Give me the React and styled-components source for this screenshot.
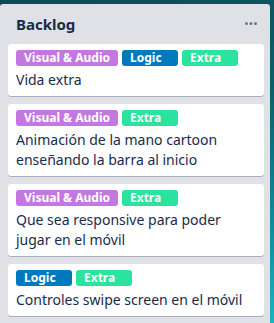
import styled, { createGlobalStyle } from 'styled-components';

const GlobalStyle = createGlobalStyle`
  html, body {
    margin: 0;
    padding: 0;
    overflow: hidden;
  }
  body {
    font-family: 'Noto Sans', 'Liberation Sans', sans-serif;
  }
`;

const LABEL_COLORS = {
  'Visual & Audio': '#c377e0',
  Logic: '#0079bf',
  Extra: '#29e39e',
};

const cards = [
  { labels: ['Visual & Audio', 'Logic', 'Extra'], title: 'Vida extra' },
  { labels: ['Visual & Audio', 'Extra'], title: 'Animación de la mano cartoon enseñando la barra al inicio' },
  { labels: ['Visual & Audio', 'Extra'], title: 'Que sea responsive para poder jugar en el móvil' },
  { labels: ['Logic', 'Extra'], title: 'Controles swipe screen en el móvil' },
];

const App = () => {
  return (
    <Board>
      <GlobalStyle />
      <List>
        <ListHeader>
          <h2>Backlog</h2>
          <MenuButton>
            <svg width='12' height='3' viewBox='0 0 12 3'>
              <circle cx='1.5' cy='1.5' r='1.5' fill='#6b778c' />
              <circle cx='6' cy='1.5' r='1.5' fill='#6b778c' />
              <circle cx='10.5' cy='1.5' r='1.5' fill='#6b778c' />
            </svg>
          </MenuButton>
        </ListHeader>
        {cards.map((card, idx) => (
          <Card key={idx}>
            <Labels>
              {card.labels.map(label => (
                <Label key={label} color={LABEL_COLORS[label]}>
                  {label}
                </Label>
              ))}
            </Labels>
            <CardTitle>{card.title}</CardTitle>
          </Card>
        ))}
      </List>
    </Board>
  );
};

const Board = styled.div`
  height: 323px;
  padding-top: 4px;
  box-sizing: border-box;
  background: linear-gradient(160deg, #0a4a55 0%, #0d5f6b 45%, #1390a0 80%, #19b3bf 100%);
  overflow: hidden;
`;

const List = styled.div`
  width: 270px;
  background: #dfe1e6;
  border-radius: 3px;
  padding-bottom: 8px;
`;

const ListHeader = styled.div`
  display: flex;
  align-items: center;
  justify-content: space-between;
  height: 40px;
  padding: 0 13px 0 16px;
  h2 {
    margin: 0;
    font-size: 15px;
    line-height: 20px;
    font-weight: 700;
    color: #172b4d;
  }
`;

const MenuButton = styled.div`
  display: flex;
  align-items: center;
  margin-top: -2px;
`;

const Card = styled.div`
  margin: 0 6px 8px 8px;
  padding: 6px 8px 2px;
  background: #fff;
  border-radius: 3px;
  box-shadow: 0 1px 0 rgba(9, 30, 66, 0.25);
`;

const Labels = styled.div`
  display: flex;
  gap: 4px;
  margin-bottom: 4px;
`;

const Label = styled.span`
  min-width: 56px;
  height: 16px;
  padding: 0 8px;
  box-sizing: border-box;
  background: ${props => props.color};
  border-radius: 3px;
  color: #fff;
  font-size: 12px;
  font-weight: 700;
  line-height: 16px;
`;

const CardTitle = styled.div`
  margin-bottom: 4px;
  font-size: 14px;
  line-height: 20px;
  color: #172b4d;
`;

export default App;
